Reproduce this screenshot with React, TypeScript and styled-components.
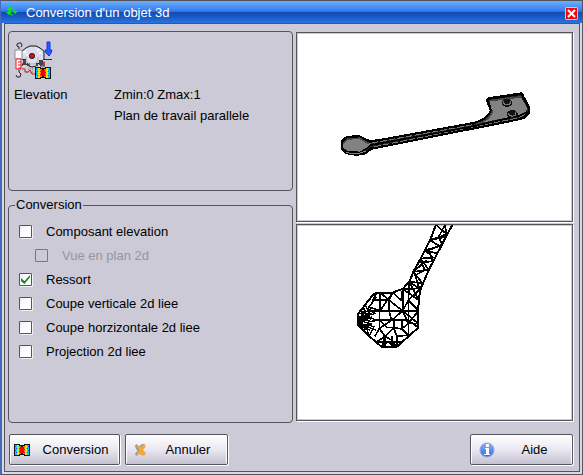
import React from "react";
import styled, { createGlobalStyle } from "styled-components";

const INK = "#55535c";
const FACE = "#cbcad6";

const GlobalStyle = createGlobalStyle`
  * { box-sizing: border-box; }
  body { margin: 0; background: ${FACE}; }
  body, button, input { font-family: "Liberation Sans", Arial, sans-serif; font-size: 13px; }
`;

const Window = styled.main`
  min-height: 100vh;
  display: flex;
  flex-direction: column;
  background: #d9d9e4;
  border: 1px solid ${INK};
  border-left: 2px solid #4868c0;
  color: #000;
`;

const TitleBar = styled.header`
  height: 22px;
  flex: none;
  display: flex;
  align-items: center;
  gap: 4px;
  padding: 2px 4px 0 5px;
  margin-left: -1px;
  background: linear-gradient(#6ab0fc 0, #3c82ee 40%, #2870e4 50%, #104cb2 51%, #1858c4 70%, #2a74e2 100%);
`;

const Title = styled.h1`
  margin: 0;
  flex: 1;
  color: #fff;
  font-size: 13px;
  line-height: 20px;
  font-weight: 400;
`;

const CloseButton = styled.button`
  width: 13px;
  height: 13px;
  padding: 0;
  border: 0;
  background: none;
  display: flex;
`;

const Body = styled.div`
  flex: 1;
  display: flex;
  flex-direction: column;
  margin: 0 2px 2px;
  border: 1px solid ${INK};
  background: ${FACE};
  padding: 7px 6px 6px 3px;
`;

const Columns = styled.div`
  flex: 1;
  display: grid;
  grid-template-columns: 285fr 277fr;
  gap: 3px;
`;

const Settings = styled.div`
  min-width: 0;
  display: grid;
  grid-template-rows: 160fr 225fr;
  gap: 6px;
`;

const Panel = styled.section`
  border: 1px solid ${INK};
  border-radius: 4px;
  padding: 9px 5px;
`;

const Facts = styled.dl`
  margin: 0;
  display: grid;
  grid-template-columns: 100px 1fr;
  line-height: 21px;
`;

const Term = styled.dt``;
const Fact = styled.dd`
  margin: 0;
  grid-column: 2;
`;

const Group = styled.fieldset`
  margin: 0;
  border: 1px solid ${INK};
  border-radius: 4px;
  padding: 6px 10px;
  min-width: 0;
`;

const Legend = styled.legend`
  padding: 0 1px;
  margin-left: -4px;
  line-height: 16px;
`;

const Option = styled.label<{ $nested?: boolean }>`
  display: flex;
  align-items: center;
  gap: 14px;
  height: 24px;
  margin-left: ${(p) => (p.$nested ? 16 : 0)}px;
  color: ${(p) => (p.$nested ? "#96959b" : "#000")};
`;

const Check = styled.input`
  appearance: none;
  width: 13px;
  height: 13px;
  margin: 0;
  flex: none;
  border: 1px solid ${INK};
  border-radius: 1px;
  background: linear-gradient(135deg, #ececf1, #fff 50%);
  box-shadow: 1px 1px 0 #f4f4f8;
  display: grid;
  place-items: center;
  &:checked::after {
    content: "";
    width: 9px;
    height: 9px;
    background: #078b12;
    clip-path: polygon(0 35%, 38% 70%, 100% 0, 100% 25%, 38% 100%, 0 68%);
  }
  &:disabled {
    background: ${FACE};
    border-color: #77757d;
    box-shadow: none;
  }
`;

const Views = styled.div`
  min-width: 0;
  display: flex;
  flex-direction: column;
  gap: 2px;
  padding: 1px 0 2px;
`;

const View = styled.div<{ $share: number }>`
  flex: ${(p) => p.$share};
  min-height: 0;
  display: flex;
  background: #fff;
  border: 1px solid ${INK};
  box-shadow: inset 0 0 0 1px ${FACE}, 1px 1px 0 #fff;
  svg { width: 100%; height: 100%; display: block; }
`;

const Footer = styled.footer`
  display: flex;
  gap: 5px;
  padding: 11px 0 0 1px;
`;

const Action = styled.button<{ $wide?: boolean; $end?: boolean }>`
  width: ${(p) => (p.$wide ? 111 : 103)}px;
  height: 31px;
  display: flex;
  align-items: center;
  padding: 0 4px;
  color: #000;
  border: 1px solid ${INK};
  border-radius: 2px;
  background: linear-gradient(#fff, #e9e8f1 50%, #c4c2d0);
  box-shadow: inset 1px 1px 0 #fff, inset -1px 0 0 #fff, 1px 1px 0 #fff;
  margin-left: ${(p) => (p.$end ? "auto" : "0")};
  svg { flex: none; margin-left: ${(p) => (p.$wide ? 0 : 4)}px; }
`;

const Caption = styled.span`
  flex: 1;
  text-align: center;
  line-height: 18px;
  padding-left: 6px;
`;

function BowTie({ x = 0, y = 0 }: { x?: number; y?: number }) {
  return (
    <g transform={`translate(${x} ${y})`} shapeRendering="crispEdges">
      <path d="M0 0h6v1h4v-1h6v12h-6v-1h-4v1h-6z" fill="#111" />
      <path d="M1 1h2v10h-2zM13 1h2v10h-2z" fill="#00cfff" />
      <path d="M3 1h2v10h-2zM11 1h2v10h-2z" fill="#ffe400" />
      <path d="M5 2h2v8h-2zM9 2h2v8h-2z" fill="#ff7b00" />
      <path d="M6 3h4v6h-4z" fill="#f40000" />
      <path d="M1 2h1v1h-1zM2 4h1v1h-1zM1 6h1v1h-1zM2 8h1v1h-1zM14 2h1v1h-1zM13 4h1v1h-1zM14 6h1v1h-1zM13 8h1v1h-1z" fill="#1260f8" />
      <path d="M4 2h1v1h-1zM3 4h1v1h-1zM4 6h1v1h-1zM3 8h1v1h-1zM11 2h1v1h-1zM12 4h1v1h-1zM11 6h1v1h-1zM12 8h1v1h-1z" fill="#42e96c" />
      <path d="M5 4h1v1h-1zM5 7h1v1h-1zM10 5h1v1h-1zM10 8h1v1h-1z" fill="#f40000" />
    </g>
  );
}

function AppIcon() {
  return (
    <svg width="16" height="14" aria-hidden="true" fill="none">
      <path d="M3 3h3q3 0 3 3M3 4v3q1 2 4 2" stroke="#12e42c" strokeWidth="1" />
      <path d="M5 0v6L1 3zM0 6h6L3 9zM7 5h5L9 8z" fill="#12e42c" />
      <path d="M9 8l5 5M14 8l-5 5" stroke="#ee141c" strokeWidth="1" />
    </svg>
  );
}

function CloseIcon() {
  return (
    <svg width="13" height="13" aria-hidden="true">
      <rect width="13" height="13" rx="2" fill="#a9d1ff" />
      <rect x="1" y="1" width="11" height="11" fill="#f00810" />
      <path d="M3 3l7 7M10 3l-7 7" stroke="#fff" strokeWidth="2" />
    </svg>
  );
}

function ElevationIcon() {
  return (
    <svg width="40" height="40" viewBox="14 41 40 40" aria-hidden="true">
      <path d="M22 52L25 48L30 46H36L41 48L44 51L46 60L44 66L41 68L38 65L34 67H29L26 65L22 67L20 62Z" fill="#dddded" />
      <path d="M23 52h3M25 49h2M26 55h2M37 50h2M39 53h2" stroke="#fff" strokeWidth="2" fill="none" />
      <path d="M22 51l4-3 4-2h6l4 2 4 3v8M22 66l2-5 2 3 3 2 3 1 4-1 3-3 2 3h3v-4" fill="none" stroke="#111" />
      <path d="M23 60h3v5h-3zM39 60h4v5h-4zM27 63h3v3h-3zM36 63h2v3h-2z" fill="#444" />
      <path d="M28 69h6M26 72h8M40 67h6" stroke="#999" strokeWidth="2" strokeDasharray="1 1" />
      <path d="M26 57v4l3 3h6l3-3v-4" fill="none" stroke="#aaaac0" />
      <path d="M22 59.500h4M43 59.500h9" stroke="#1515e8" />
      <circle cx="32" cy="56" r="3" fill="#222" />
      <circle cx="32" cy="56" r="2" fill="#eb0909" />
      <path d="M19 49v-2l-2-1v-2l2-1h2l1 2-1 2" fill="none" stroke="#222" />
      <path d="M19 70v2l2 2-1 3h-3l-1-2" fill="none" stroke="#222" />
      <path d="M15 50h7v9h-7z" fill="#fff" stroke="#8c8c98" />
      <path d="M16 59h5v10h-5z" fill="#fff" stroke="#e31525" />
      <path d="M18 62h3M18 65h3M18 68h3" stroke="#ed0a16" />
      <path d="M22 69h3v3h3l2-2 2 4h3M44 61v5" fill="none" stroke="#ed0a16" />
      <path d="M47 42h3v8h2l-1 3-2 3-3-3-1-3h2z" fill="#245cff" stroke="#1830e8" />
      <BowTie x={35} y={67} />
    </svg>
  );
}

function CancelIcon() {
  return (
    <svg width="13" height="14" viewBox="0 0 15 16" aria-hidden="true">
      <path d="M1 3l2-2 3 3 3-3h3l1 3-3 4 3 3-1 3h-3l-3-2-3 3-2-2 3-4-2-3z" fill="#99979e" />
      <path d="M4 2l3 3 3-3h3v3l-3 3 4 4-2 2h-3l-2-2-3 2-1-1 3-5-3-4z" fill="#f8a638" />
    </svg>
  );
}

function InfoIcon() {
  return (
    <svg width="16" height="16" aria-hidden="true">
      <defs>
        <linearGradient id="info" x2="0" y2="1">
          <stop stopColor="#86aef5" />
          <stop offset="1" stopColor="#3c6cd8" />
        </linearGradient>
      </defs>
      <circle cx="8" cy="8" r="7" fill="url(#info)" stroke="#8ba6dc" />
      <path d="M7 2h3v3H7zM6 6h4v6h1v1H5v-1h2V7H6z" fill="#fff" />
    </svg>
  );
}

function SpoonModel() {
  return (
    <svg viewBox="-114 -153 825 561" role="img" aria-label="Objet 3d" shapeRendering="crispEdges">
      <g strokeLinejoin="round" strokeLinecap="round">
        <path d="M22 170L35 159L72 156L88 165L106 172L140 167L415 117Q455 108 469 80L457 50L460 43L560 28L565 39L582 70V86L567 100L525 110L136 187L108 193L90 207L65 211L34 206L22 194Z" fill="#282828" stroke="#000" strokeWidth="8" />
        <path d="M25 173L38 163L72 161L91 171L111 179L95 194L75 203L39 201L25 191Z" fill="#828282" />
        <path d="M463 49L557 37L561 44L577 73L570 87L552 92L428 118Q462 105 471 79Z" fill="#828282" />
        <path d="M26 176L37 164L73 162L101 177M465 49L555 38M473 80Q464 108 425 119" fill="none" stroke="#444" strokeWidth="5" />
        <path d="M112 176L415 121M120 187L550 101L572 90" fill="none" stroke="#777" strokeWidth="3" strokeDasharray="17 9" />
        <path d="M105 183L410 127L552 95L575 84" fill="none" stroke="#000" strokeWidth="5" />
        <path d="M26 196L39 202L75 204L94 193L111 181" fill="none" stroke="#000" strokeWidth="4" />
        <path d="M33 205L66 209L91 201" fill="none" stroke="#828282" strokeWidth="3" />
      </g>
      {[[516, 55], [532, 89]].map(([x, y]) => (
        <g key={x}>
          <ellipse cx={x} cy={y} rx="14" ry="10" fill="#777" stroke="#111" strokeWidth="4" />
          <ellipse cx={x} cy={y - 2} rx="9" ry="7" fill="#111" />
          <path d={`M${x - 12} ${y + 7}q12 8 22 0`} fill="none" stroke="#111" strokeWidth="3" />
        </g>
      ))}
    </svg>
  );
}

function MeshModel() {
  return (
    <svg viewBox="-159 15 825 585" role="img" aria-label="Maillage" fill="none" stroke="#000" strokeLinejoin="round" shapeRendering="crispEdges">
      <path strokeWidth="6" d="M258 14L240 60L212 115L190 155L178 185L158 206L128 217H80L68 225L25 280V315L58 348L95 380H140L205 322V302V270L206 240L212 205L236 150L262 100L285 55L307 14" />
      <path strokeWidth="5" d="M258 14L290 42L240 60L270 78L225 90L250 112L212 115L236 148L190 155L217 188L178 185M290 42L285 14L266 50L276 73L237 90L248 124L213 125L225 150L195 165L208 205L178 185M240 60L285 50M225 90L262 100M190 155L230 120" />
      <path strokeWidth="5" d="M158 206L206 240L178 185L175 240V345M158 206L153 240L128 217M158 206L212 205L175 240L205 270L158 272V206M175 240L158 272L117 240L128 217L90 272V217L117 240M80 217L68 240L117 240V272L90 272L57 260L80 230M60 272H205L175 310H205L158 272L125 300L117 272M158 272L175 310L155 326V300M125 300H175L205 322M131 297V322L155 326L175 345L140 348L131 322L105 348L88 325L88 272M88 300H125L88 325L75 348M88 300L112 322H131M140 348V380L125 360L105 348L95 380L112 365L140 380M80 365H155M105 348L80 365M105 348V380M125 348V380" />
      <path strokeWidth="4" d="M25 280L65 280L25 290L55 300L25 300L65 312L25 315L45 292L30 270L58 287L25 315L60 330M25 300L48 275L40 260L50 300L25 305L48 317L43 330L58 315L72 320L58 348L48 317L35 320M25 288L58 304L88 300L50 292L65 260M30 310L50 280L34 272L38 318M46 254L55 272L34 282M25 293L75 280L55 265M30 300L65 290L50 318L78 330" />
    </svg>
  );
}

const options = [
  { label: "Composant elevation" },
  { label: "Vue en plan 2d", nested: true },
  { label: "Ressort", checked: true },
  { label: "Coupe verticale 2d liee" },
  { label: "Coupe horzizontale 2d liee" },
  { label: "Projection 2d liee" },
];

export default function App() {
  return (
    <>
      <GlobalStyle />
      <Window>
        <TitleBar>
          <AppIcon />
          <Title>Conversion d'un objet 3d</Title>
          <CloseButton type="button" aria-label="Fermer"><CloseIcon /></CloseButton>
        </TitleBar>
        <Body>
          <Columns>
            <Settings>
              <Panel>
                <ElevationIcon />
                <Facts>
                  <Term>Elevation</Term>
                  <Fact>Zmin:0 Zmax:1</Fact>
                  <Fact>Plan de travail parallele</Fact>
                </Facts>
              </Panel>
              <Group>
                <Legend>Conversion</Legend>
                {options.map(({ label, nested, checked }) => (
                  <Option key={label} $nested={nested}>
                    <Check type="checkbox" defaultChecked={checked} disabled={nested} />
                    {label}
                  </Option>
                ))}
              </Group>
            </Settings>
            <Views>
              <View $share={190}><SpoonModel /></View>
              <View $share={198}><MeshModel /></View>
            </Views>
          </Columns>
          <Footer>
            <Action type="button" $wide>
              <svg width="16" height="12" aria-hidden="true"><BowTie /></svg>
              <Caption>Conversion</Caption>
            </Action>
            <Action type="button"><CancelIcon /><Caption>Annuler</Caption></Action>
            <Action type="button" $end><InfoIcon /><Caption>Aide</Caption></Action>
          </Footer>
        </Body>
      </Window>
    </>
  );
}
